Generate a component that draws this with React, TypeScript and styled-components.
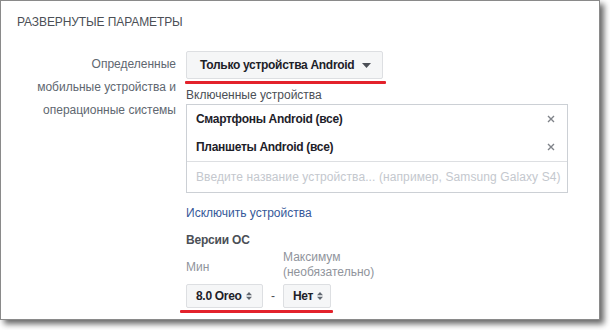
import React from 'react'
import styled, { createGlobalStyle } from 'styled-components'

const GlobalStyle = createGlobalStyle`
  html, body {
    margin: 0;
    padding: 0;
    background: #ffffff;
  }
  body {
    font-family: "Liberation Sans", Arial, sans-serif;
    color: #4b4f56;
  }
`

const Page = styled.div`
  width: 610px;
  height: 330px;
  overflow: hidden;
`

const Card = styled.div`
  box-sizing: border-box;
  width: 600px;
  height: 320px;
  border: 1px solid #8a8a8a;
  background: #fff;
  box-shadow: 4px 4px 6px rgba(0, 0, 0, 0.6);
  padding: 13px 0 0 16px;
`

const Heading = styled.div`
  font-size: 12px;
  line-height: 16px;
  text-transform: uppercase;
  color: #4b4f56;
  letter-spacing: -0.1px;
`

const Row = styled.div`
  display: grid;
  grid-template-columns: 159px 1fr;
  column-gap: 10px;
  margin-top: 21px;
`

const Label = styled.div`
  text-align: right;
  font-size: 12px;
  line-height: 23px;
  padding-top: 2px;
  color: #606770;
`

const Field = styled.div`
  display: flex;
  flex-direction: column;
  align-items: flex-start;
`

const Marked = styled.div`
  display: flex;
  flex-direction: column;
  align-items: flex-start;
  gap: 2px;
`

const RedLine = styled.div`
  height: 3px;
  width: ${p => p.$width}px;
  margin-left: ${p => p.$offset || 0}px;
  background: #e3222b;
  border-radius: 1px;
`

const DropButton = styled.div`
  box-sizing: border-box;
  height: 28px;
  width: 197px;
  display: flex;
  align-items: center;
  justify-content: space-between;
  padding: 0 11px 0 13px;
  background: #f5f6f7;
  border: 1px solid #dddfe2;
  border-radius: 2px;
  font-size: 12px;
  font-weight: bold;
  letter-spacing: -0.3px;
  color: #1d2129;
`

const SubLabel = styled.div`
  font-size: 12px;
  line-height: 16px;
  color: #4b4f56;
  margin-top: ${p => p.$top || 0}px;
`

const TokenBox = styled.div`
  box-sizing: border-box;
  width: 382px;
  margin-top: 1px;
  border: 1px solid #ccd0d5;
  background: #fff;
`

const Token = styled.div`
  height: 28px;
  display: flex;
  align-items: center;
  justify-content: space-between;
  padding: 0 12px 0 9px;
  font-size: 12px;
  font-weight: bold;
  letter-spacing: -0.3px;
  color: #1d2129;
`

const InputRow = styled.div`
  height: 30px;
  border-top: 1px solid #dddfe2;
  display: flex;
  align-items: center;
  padding-left: 9px;
  font-size: 12px;
  letter-spacing: 0.1px;
  color: #c4c8ce;
  white-space: nowrap;
`

const Link = styled.div`
  font-size: 12px;
  line-height: 16px;
  color: #365899;
  margin-top: 12px;
`

const BoldLabel = styled.div`
  font-size: 12px;
  line-height: 16px;
  font-weight: bold;
  letter-spacing: -0.2px;
  color: #4b4f56;
  margin-top: 11px;
`

const Versions = styled.div`
  display: flex;
  align-items: flex-end;
  margin-top: 2px;
`

const VersionCol = styled.div`
  display: flex;
  flex-direction: column;
  align-items: flex-start;
`

const Hint = styled.div`
  font-size: 12px;
  line-height: 15px;
  color: #90949c;
  margin-bottom: ${p => p.$below || 4}px;
`

const Dash = styled.div`
  width: 20px;
  text-align: center;
  font-size: 12px;
  line-height: 23px;
  color: #4b4f56;
`

const Select = styled.div`
  box-sizing: border-box;
  height: 24px;
  width: ${p => p.$width}px;
  display: flex;
  align-items: center;
  gap: 4px;
  padding-left: 9px;
  background: #f5f6f7;
  border: 1px solid #dddfe2;
  border-radius: 2px;
  font-size: 12px;
  font-weight: bold;
  letter-spacing: -0.3px;
  color: #1d2129;
`

const Caret = () => (
  <svg width="9" height="5" viewBox="0 0 9 5">
    <path d="M0 0h9L4.5 5z" fill="#4b4f56" />
  </svg>
)

const UpDown = () => (
  <svg width="6" height="8" viewBox="0 0 6 8">
    <path d="M0 3.2L3 0l3 3.2zM0 4.8h6L3 8z" fill="#606770" />
  </svg>
)

const Close = () => (
  <svg width="8" height="8" viewBox="0 0 8 8">
    <path d="M1 1l6 6M7 1L1 7" stroke="#7f8389" strokeWidth="1.4" />
  </svg>
)

export default function App() {
  return (
    <Page>
      <GlobalStyle />
      <Card>
        <Heading>Развернутые параметры</Heading>
        <Row>
          <Label>
            Определенные
            <br />
            мобильные устройства и
            <br />
            операционные системы
          </Label>
          <Field>
            <Marked>
              <DropButton>
                Только устройства Android
                <Caret />
              </DropButton>
              <RedLine $width={201} $offset={-1} />
            </Marked>
            <SubLabel $top={3}>Включенные устройства</SubLabel>
            <TokenBox>
              <Token>
                Смартфоны Android (все)
                <Close />
              </Token>
              <Token>
                Планшеты Android (все)
                <Close />
              </Token>
              <InputRow>Введите название устройства... (например, Samsung Galaxy S4)</InputRow>
            </TokenBox>
            <Link>Исключить устройства</Link>
            <BoldLabel>Версии ОС</BoldLabel>
            <Marked>
              <Versions>
                <VersionCol>
                  <Hint $below={9}>Мин</Hint>
                  <Select $width={77}>
                    8.0 Oreo
                    <UpDown />
                  </Select>
                </VersionCol>
                <Dash>-</Dash>
                <VersionCol>
                  <Hint>
                    Максимум
                    <br />
                    (необязательно)
                  </Hint>
                  <Select $width={48}>
                    Нет
                    <UpDown />
                  </Select>
                </VersionCol>
              </Versions>
              <RedLine $width={153} $offset={-6} />
            </Marked>
          </Field>
        </Row>
      </Card>
    </Page>
  )
}
